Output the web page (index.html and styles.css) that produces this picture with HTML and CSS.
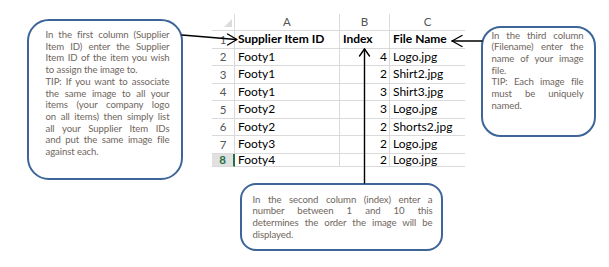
FILE: index.html
```html
<!DOCTYPE html>
<html>
<head>
<meta charset="utf-8">
<link rel="stylesheet" href="styles.css">
</head>
<body>
<div class="page">
  <div class="sheet">
    <div class="c corner"><span class="tri"></span></div>
    <div class="c colh">A</div>
    <div class="c colh">B</div>
    <div class="c colh">C</div>

    <div class="c rowh">1</div>
    <div class="c txt b">Supplier Item ID</div>
    <div class="c txt b">Index</div>
    <div class="c txt b">File Name</div>

    <div class="c rowh">2</div>
    <div class="c txt">Footy1</div>
    <div class="c num">4</div>
    <div class="c txt">Logo.jpg</div>

    <div class="c rowh">3</div>
    <div class="c txt">Footy1</div>
    <div class="c num">2</div>
    <div class="c txt">Shirt2.jpg</div>

    <div class="c rowh">4</div>
    <div class="c txt">Footy1</div>
    <div class="c num">3</div>
    <div class="c txt">Shirt3.jpg</div>

    <div class="c rowh">5</div>
    <div class="c txt">Footy2</div>
    <div class="c num">3</div>
    <div class="c txt">Logo.jpg</div>

    <div class="c rowh">6</div>
    <div class="c txt">Footy2</div>
    <div class="c num">2</div>
    <div class="c txt">Shorts2.jpg</div>

    <div class="c rowh">7</div>
    <div class="c txt">Footy3</div>
    <div class="c num">2</div>
    <div class="c txt">Logo.jpg</div>

    <div class="c rowh sel">8</div>
    <div class="c txt">Footy4</div>
    <div class="c num">2</div>
    <div class="c txt">Logo.jpg</div>
  </div>

  <div class="callout left">
    <span class="j">In the first column (Supplier</span>
    <span class="j">Item ID) enter the Supplier</span>
    <span class="j">Item ID of the item you wish</span>
    <span>to assign the image to.</span>
    <span class="j">TIP: If you want to associate</span>
    <span class="j">the same image to all your</span>
    <span class="j">items (your company logo</span>
    <span class="j">on all items) then simply list</span>
    <span class="j">all your Supplier Item IDs</span>
    <span class="j">and put the same image file</span>
    <span>against each.</span>
  </div>

  <div class="callout right">
    <span class="j">In the third column</span>
    <span class="j">(Filename) enter the</span>
    <span class="j">name of your image</span>
    <span>file.</span>
    <span class="j">TIP: Each image file</span>
    <span class="j">must be uniquely</span>
    <span>named.</span>
  </div>

  <div class="callout bottom">
    <span class="j">In the second column (index) enter a</span>
    <span class="j">number between 1 and 10 this</span>
    <span class="j">determines the order the image will be</span>
    <span>displayed.</span>
  </div>

  <svg class="arrows" width="609" height="267" viewBox="0 0 609 267">
    <g fill="none" stroke="#000" stroke-width="1.4" stroke-linecap="round" stroke-linejoin="round">
      <path d="M182 35 L236 39.5"/>
      <path d="M227.5 34 L237 39.5 L227.5 45"/>
      <path d="M482 41 L452 41"/>
      <path d="M462 35.5 L452 41 L462 46.5"/>
      <path d="M364.5 183 L364.5 49"/>
      <path d="M359.5 56 L364.5 49 L369.5 56"/>
    </g>
  </svg>
</div>
</body>
</html>
```

FILE: styles.css
```css
* { box-sizing: border-box; }
html, body { margin: 0; padding: 0; background: #fff; }
.page {
  position: relative;
  width: 609px;
  height: 267px;
  overflow: hidden;
  background: #fff;
}
.sheet {
  display: grid;
  grid-template-columns: 23px 105px 50px 75px;
  grid-template-rows: 17px repeat(7, 17.5px);
  margin: 14px 0 0 212px;
  width: 253px;
  font-family: Lato, "Liberation Sans", sans-serif;
  font-size: 12px;
  color: #000;
}
.c {
  border-right: 1px solid #dadada;
  border-bottom: 1px solid #dadada;
  display: flex;
  align-items: center;
  white-space: nowrap;
  line-height: 1;
}
.c:nth-child(4n) { border-right: none; }
.corner {
  justify-content: flex-end;
  align-items: flex-end;
  padding: 0 2px 3px 0;
}
.tri {
  width: 0;
  height: 0;
  border-left: 8px solid transparent;
  border-bottom: 8px solid #dcdcdc;
}
.colh {
  justify-content: center;
  color: #555;
  font-size: 11.5px;
}
.rowh {
  justify-content: center;
  color: #555;
  font-size: 11.5px;
}
.rowh.sel {
  background: #e1e1e1;
  color: #217346;
  font-weight: bold;
  border-right: 2px solid #217346;
}
.txt { padding-left: 3px; }
.b { font-weight: bold; }
.num { justify-content: flex-end; padding-right: 2px; }

.callout {
  position: absolute;
  border: 2.7px solid #3d6597;
  background: #fff;
  font-family: Lato, "Liberation Sans", sans-serif;
  font-size: 9.6px;
  letter-spacing: -0.1px;
  line-height: 11.7px;
  color: #6f665e;
}
.callout span { display: block; white-space: nowrap; }
.callout span.j { text-align: justify; text-align-last: justify; }
.left {
  left: 27px; top: 19px; width: 156px; height: 161px;
  border-radius: 22px;
  padding: 8px 11.5px 0 16.5px;
}
.right {
  left: 481px; top: 26px; width: 115px; height: 111px;
  border-radius: 20px;
  padding: 1.5px 10.5px 0 8.5px;
}
.bottom {
  left: 240px; top: 183px; width: 203px; height: 68px;
  border-radius: 16px;
  padding: 8.5px 8.5px 0 10.5px;
}
.arrows {
  position: absolute;
  left: 0;
  top: 0;
  pointer-events: none;
}
```
